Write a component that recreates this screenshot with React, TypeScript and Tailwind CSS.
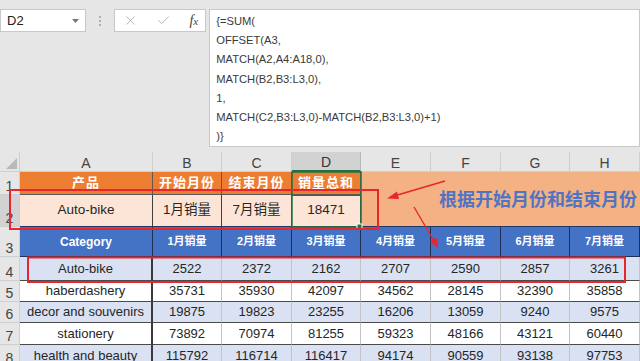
import React from 'react';
import { X, Check } from 'lucide-react';

const cols = ['A', 'B', 'C', 'D', 'E', 'F', 'G', 'H'];
const months = ['1月销量', '2月销量', '3月销量', '4月销量', '5月销量', '6月销量', '7月销量'];

const data: [string, number[]][] = [
  ['Auto-bike', [2522, 2372, 2162, 2707, 2590, 2857, 3261]],
  ['haberdashery', [35731, 35930, 42097, 34562, 28145, 32390, 35858]],
  ['decor and souvenirs', [19875, 19823, 23255, 16206, 13059, 9240, 9575]],
  ['stationery', [73892, 70974, 81255, 59323, 48166, 43121, 60440]],
  ['health and beauty', [115792, 116714, 116417, 94174, 90559, 93138, 97753]],
];

const formula = [
  '{=SUM(',
  'OFFSET(A3,',
  'MATCH(A2,A4:A18,0),',
  'MATCH(B2,B3:L3,0),',
  '1,',
  'MATCH(C2,B3:L3,0)-MATCH(B2,B3:L3,0)+1)',
  ')}',
];

function RowHead({ n, active }: { n: number; active?: boolean }) {
  return (
    <div
      className={`flex items-end justify-center pb-[1px] border-r border-b border-[#cfcfcf] text-[14px] leading-none text-[#444] ${active ? 'bg-[#d2d2d2]' : 'bg-[#e6e6e6]'}`}
    >
      {n}
    </div>
  );
}

export default function App() {
  return (
    <div
      className="relative w-[640px] h-[361px] overflow-hidden bg-[#e6e6e6] text-[#262626]"
      style={{ fontFamily: '"Liberation Sans", "Noto Sans CJK SC", sans-serif' }}
    >
      {/* toolbar + formula bar */}
      <div className="flex items-start h-[152px] pt-[9px]">
        <div className="w-[88px] h-[23px] bg-white border border-[#c8c8c8] flex items-center justify-between pl-[6px] pr-[6px] text-[13px] text-[#222]">
          <span>D2</span>
          <svg width="7" height="4" viewBox="0 0 7 4">
            <polygon points="0,0 7,0 3.5,4" fill="#777" />
          </svg>
        </div>
        <div className="w-[28px] h-[23px] flex flex-col items-center justify-center gap-[2px]">
          <span className="w-[2px] h-[2px] bg-[#b0b0b0]" />
          <span className="w-[2px] h-[2px] bg-[#b0b0b0]" />
          <span className="w-[2px] h-[2px] bg-[#b0b0b0]" />
        </div>
        <div className="w-[94px] h-[23px] bg-white border border-[#c8c8c8] flex items-center justify-between pl-[8px] pr-[7px]">
          <X size={15} strokeWidth={1.3} color="#a8a8a8" />
          <Check size={15} strokeWidth={1.3} color="#a8a8a8" />
          <span
            className="italic text-[14px] text-[#444]"
            style={{ fontFamily: '"Liberation Serif", serif' }}
          >
            f<span className="text-[11px]">x</span>
          </span>
        </div>
        <div className="ml-[3px] w-[440px] h-[138px] bg-white border border-[#c8c8c8] pl-[6px] pt-[2px] text-[11.2px] leading-[19.2px] text-[#3a3a3a]">
          {formula.map((l, i) => (
            <div key={i}>{l}</div>
          ))}
        </div>
      </div>

      {/* sheet grid */}
      <div className="grid grid-cols-[20px_133px_69px_70px_69px_70px_70px_69px_70px] grid-rows-[20px_23px_32px_30px_24px_21px_21px_22px_22px]">
        {/* corner */}
        <div className="relative border-r border-b border-[#cfcfcf] bg-[#e6e6e6]">
          <svg className="absolute right-[2px] bottom-[2px]" width="11" height="11" viewBox="0 0 11 11">
            <polygon points="11,0 11,11 0,11" fill="#b9b9b9" />
          </svg>
        </div>
        {cols.map((c) => (
          <div
            key={c}
            className={`flex items-end justify-center pb-[1px] border-r text-[14px] leading-none ${c === 'D' ? 'bg-[#d2d2d2] border-b-2 border-b-[#217346] border-r-[#b8b8b8] text-[#333]' : 'bg-[#e6e6e6] border-b border-[#cfcfcf] text-[#444]'}`}
          >
            {c}
          </div>
        ))}

        {/* row 1 */}
        <RowHead n={1} />
        {['产品', '开始月份', '结束月份', '销量总和'].map((t) => (
          <div
            key={t}
            className="flex items-center justify-center bg-[#ed7d31] border-r border-b border-[#5a5a5a] text-white font-bold text-[13px] tracking-[1px]"
          >
            {t}
          </div>
        ))}
        <div className="col-span-4 row-span-2 flex items-center bg-[#f4b183] pl-[78px] pt-[3px] overflow-hidden whitespace-nowrap text-[18px] font-bold text-[#4f74c2] border-b border-[#1f3864]">
          根据开始月份和结束月份
        </div>

        {/* row 2 */}
        <RowHead n={2} active />
        {['Auto-bike', '1月销量', '7月销量', '18471'].map((t) => (
          <div
            key={t}
            className="flex items-center justify-center bg-[#fce4d6] border-r border-b border-r-[#404040] border-b-[#1f3864] text-[13.5px]"
          >
            {t}
          </div>
        ))}

        {/* row 3 */}
        <RowHead n={3} />
        <div className="flex items-center justify-center bg-[#4472c4] border-r border-b border-[#1f2f55] text-white font-bold text-[12px]">
          Category
        </div>
        {months.map((m) => (
          <div
            key={m}
            className="flex items-center justify-center bg-[#4472c4] border-r border-b border-[#1f2f55] text-white font-bold text-[11px]"
          >
            {m}
          </div>
        ))}

        {/* data rows */}
        {data.map(([name, vals], i) => {
          const bg = i % 2 === 0 ? 'bg-[#d9e1f2]' : 'bg-white';
          return (
            <React.Fragment key={name}>
              <RowHead n={i + 4} />
              <div className={`flex items-center justify-center ${bg} border-r-2 border-b border-r-[#3a3a3a] border-b-[#4a4a4a] text-[13px]`}>
                {name}
              </div>
              {vals.map((v, j) => (
                <div
                  key={j}
                  className={`flex items-center justify-center ${bg} border-r border-b border-r-[#c4c4c4] border-b-[#4a4a4a] text-[13px]`}
                >
                  {v}
                </div>
              ))}
            </React.Fragment>
          );
        })}
      </div>

      {/* selection + annotations overlay */}
      <svg className="absolute left-0 top-0 pointer-events-none" width="640" height="361" viewBox="0 0 640 361">
        <rect x="292" y="172" width="69" height="55" fill="none" stroke="#217346" strokeWidth="1.5" />
        <line x1="292" y1="195.5" x2="361" y2="195.5" stroke="#217346" strokeWidth="1" />
        <rect x="357" y="224" width="5" height="5" fill="#217346" stroke="#fff" strokeWidth="1" />

        <rect x="10" y="190" width="368" height="39" fill="none" stroke="#e8262d" strokeWidth="2" />
        <rect x="28" y="257.5" width="597" height="24.5" fill="none" stroke="#e8262d" strokeWidth="2" />

        <line x1="445" y1="181" x2="394" y2="196" stroke="#e8262d" strokeWidth="1.6" />
        <polygon points="387,198.5 397,191.5 399,199" fill="#e8262d" />

        <line x1="414" y1="207" x2="434" y2="241" stroke="#e8262d" strokeWidth="1.4" />
        <polygon points="438,248.5 430,241 437,238" fill="#e8262d" />
      </svg>
    </div>
  );
}
